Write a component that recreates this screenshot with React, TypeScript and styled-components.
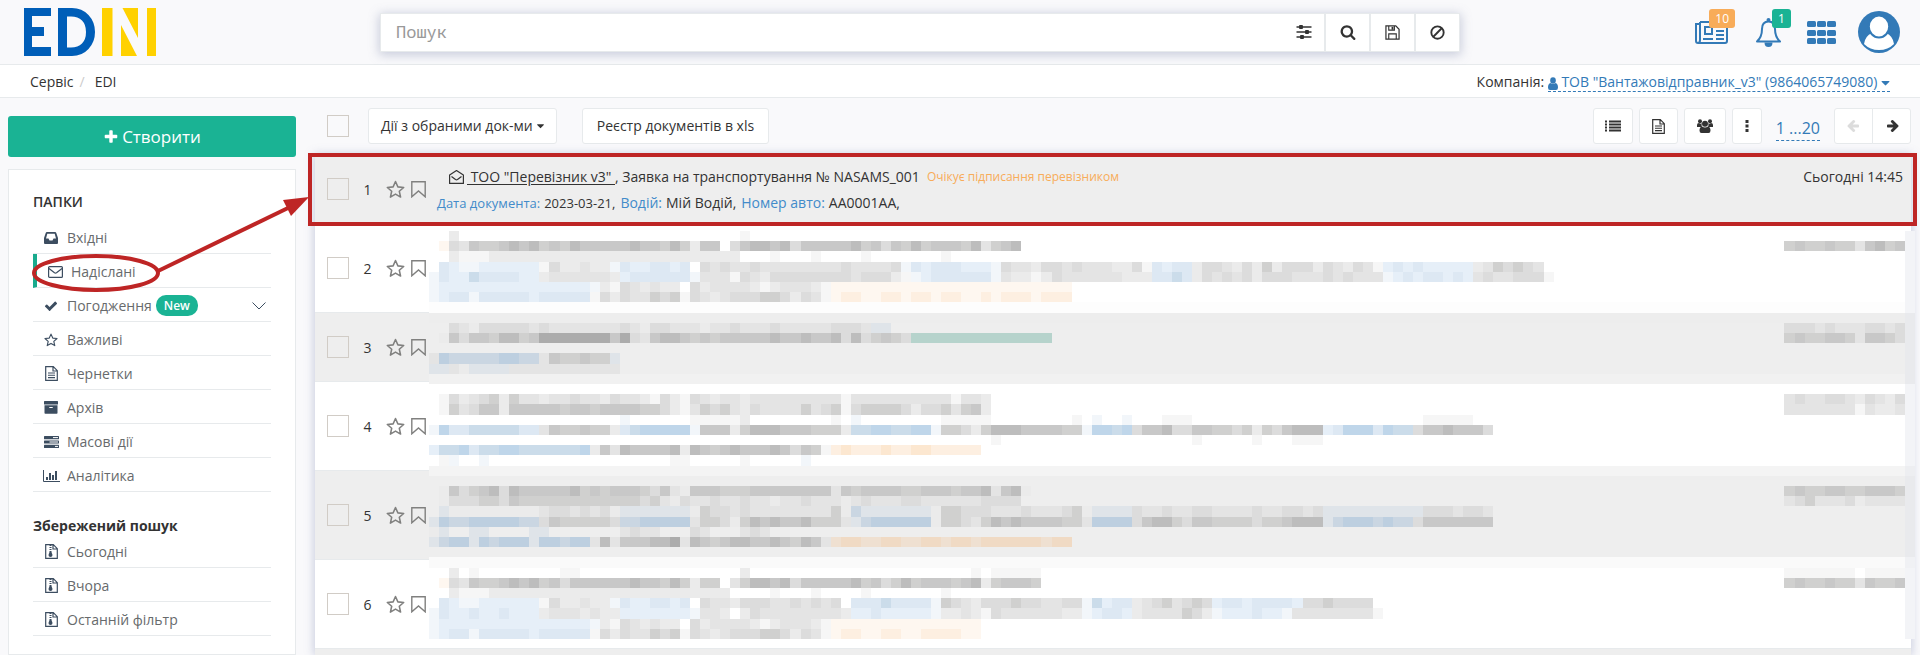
import React from 'react';
import styled, { createGlobalStyle, css } from 'styled-components';

/* ---------- palette ---------- */
const c = {
  page: '#f9f9fb',
  line: '#e7eaec',
  text: '#333333',
  muted: '#676a6c',
  link: '#337ab7',
  linkSoft: '#428bca',
  green: '#1ab394',
  orange: '#f8ac59',
  navy: '#3c4d60',
  mark: '#be2525',
  zebra: '#eeeeee',
};

const Global = createGlobalStyle`
  *, *::before, *::after { box-sizing: border-box; }
  html, body { margin: 0; padding: 0; }
  body {
    background: ${c.page};
    color: ${c.text};
    font-family: "Open Sans", "Noto Sans", sans-serif;
    font-size: 14px;
    font-kerning: none;
    line-height: 20px;
  }
  button, input { font: inherit; font-kerning: none; color: inherit; }
  button { cursor: pointer; }
  ul { list-style: none; margin: 0; padding: 0; }
  h2 { margin: 0; font-size: 14px; }
`;

/* ---------- icons ---------- */
type IconProps = { size?: number; w?: number; h?: number; box?: string; children: React.ReactNode; flip?: boolean };

const Svg = styled.svg<{ $flip?: boolean }>`
  display: inline-block;
  flex: none;
  vertical-align: middle;
  fill: currentColor;
  ${(p) => p.$flip && css`transform: scaleX(-1);`}
`;

const Icon = ({ size = 16, w, h, box = '0 0 16 16', children, flip }: IconProps) => (
  <Svg width={w ?? size} height={h ?? size} viewBox={box} $flip={flip} aria-hidden="true">
    {children}
  </Svg>
);

const line = { fill: 'none', stroke: 'currentColor' } as const;

const PlusIcon = () => (
  <Icon size={16} box="0 0 1792 1792">
    <path d="M1600 736v192q0 40-28 68t-68 28h-416v416q0 40-28 68t-68 28h-192q-40 0-68-28t-28-68v-416h-416q-40 0-68-28t-28-68v-192q0-40 28-68t68-28h416v-416q0-40 28-68t68-28h192q40 0 68 28t28 68v416h416q40 0 68 28t28 68z" />
  </Icon>
);
const CaretIcon = ({ size = 14 }: { size?: number }) => (
  <Icon w={size - 5} h={size} box="384 0 1024 1792">
    <path d="M1408 704q0 26-19 45l-448 448q-19 19-45 19t-45-19l-448-448q-19-19-19-45t19-45 45-19h896q26 0 45 19t19 45z" />
  </Icon>
);
const SearchIcon = () => (
  <Icon size={16} box="0 0 1792 1792">
    <path d="M1216 832q0-185-131.5-316.5t-316.5-131.5-316.5 131.5-131.5 316.5 131.5 316.5 316.5 131.5 316.5-131.5 131.5-316.5zm512 832q0 52-38 90t-90 38q-54 0-90-38l-343-342q-179 124-399 124-143 0-273.5-55.5t-225-150-150-225-55.5-273.5 55.5-273.5 150-225 225-150 273.5-55.5 273.5 55.5 225 150 150 225 55.5 273.5q0 220-124 399l343 343q37 37 37 90z" />
  </Icon>
);
const ArrowIcon = ({ flip }: { flip?: boolean }) => (
  <Icon size={14} box="0 0 1792 1792" flip={flip}>
    <path d="M1728 893q0 54-37 91l-651 651q-39 37-91 37-51 0-90-37l-75-75q-38-38-38-91t38-91l293-293h-704q-52 0-84.5-37.5t-32.5-90.5v-128q0-53 32.5-90.5t84.5-37.5h704l-293-294q-38-36-38-90t38-90l75-75q38-38 90-38 53 0 91 38l651 651q37 35 37 90z" />
  </Icon>
);
const CheckIcon = () => (
  <Icon size={14} box="0 0 1792 1792">
    <path d="M1671 566q0 40-28 68l-724 724-136 136q-28 28-68 28t-68-28l-136-136-362-362q-28-28-28-68t28-68l136-136q28-28 68-28t68 28l294 295 656-657q28-28 68-28t68 28l136 136q28 28 28 68z" />
  </Icon>
);
const SlidersIcon = () => (
  <Icon>
    <path d="M0.500 3h15M0.500 8h15M0.500 13h15" {...line} strokeWidth="1.300" />
    <rect x="3" y="1" width="4" height="4" rx="1" />
    <rect x="9" y="6" width="4" height="4" rx="1" />
    <rect x="4" y="11" width="4" height="4" rx="1" />
  </Icon>
);
const SaveIcon = () => (
  <Icon size={15}>
    <path d="M1 1h10.500L15 4.500V15H1z" {...line} strokeWidth="1.300" />
    <path d="M4 15V9.500h8V15M4 1v4.500h6V1" {...line} strokeWidth="1.200" />
    <rect x="7" y="2" width="2" height="3" />
  </Icon>
);
const BanIcon = () => (
  <Icon size={15}>
    <circle cx="8" cy="8" r="6.600" {...line} strokeWidth="2" />
    <path d="M3.500 12.500l9-9" {...line} strokeWidth="2" />
  </Icon>
);
const NewsIcon = () => (
  <Icon w={33} h={23} box="0 0 33 23">
    <path d="M5 1h26q1 0 1 1v18q0 2-2 2H3q-2 0-2-2V3h4M5 1v18q0 3-2 3" {...line} strokeWidth="2" />
    <path d="M10 6h7v7h-7z" {...line} strokeWidth="2" />
    <path d="M21 6h8M21 10h8M21 14h8M8 18h10M21 18h8" {...line} strokeWidth="2" />
  </Icon>
);
const BellIcon = () => (
  <Icon w={27} h={29} box="0 0 27 29">
    <path d="M2 23.500q5-4.500 5-12.500q0-7.500 6.500-7.500t6.500 7.500q0 8 5 12.500z" {...line} strokeWidth="2" strokeLinejoin="round" />
    <circle cx="13.500" cy="2" r="2" />
    <path d="M9.500 24.500h8q0 4.500-4 4.500t-4-4.500z" />
  </Icon>
);
const AppsIcon = () => (
  <Icon w={29} h={23} box="0 0 29 23">
    {[0, 9, 17].map((y) =>
      [0, 10, 20].map((x) => <rect key={`${x}-${y}`} x={x} y={y} width="9" height="6" rx="1.500" />),
    )}
  </Icon>
);
const AvatarIcon = () => (
  <Icon size={42} box="0 0 42 42">
    <circle cx="21" cy="21" r="21" />
    <path d="M14 22q3 5 7 5t7-5q7 3 8 11Q30 39 21 39T6 33Q7 25 14 22z" fill="#fff" />
    <ellipse cx="21" cy="15.500" rx="10.200" ry="11" fill="#fff" stroke="currentColor" strokeWidth="2" />
  </Icon>
);
const UserIcon = () => (
  <Icon w={10} h={13} box="0 0 10 13">
    <ellipse cx="5" cy="3.500" rx="2.800" ry="3.300" />
    <path d="M2.500 6q2.500 2 5 0q2.500.500 2.500 4.500q0 2.500-2 2.500h-6q-2 0-2-2.500q0-4 2.500-4.500z" />
  </Icon>
);
const ListIcon = () => (
  <Icon w={16} h={12} box="0 0 16 12">
    {[0, 3, 6, 9].map((y) => (
      <g key={y}>
        <rect x="0" y={y + 0.500} width="2" height="2" />
        <rect x="4" y={y + 0.500} width="12" height="2" />
      </g>
    ))}
  </Icon>
);
const FileIcon = () => (
  <Icon w={13} h={15} box="0 0 13 15">
    <path d="M0.700 0.700h7.600l4 4v9.600H0.700z M8 1v4h4" {...line} strokeWidth="1.200" />
    <path d="M3 7h7M3 9.300h7M3 11.600h7" {...line} strokeWidth="1.100" />
  </Icon>
);
const ZipIcon = () => (
  <Icon w={13} h={15} box="0 0 13 15">
    <path d="M0.700 0.700h7.600l4 4v9.600H0.700z M8 1v4h4" {...line} strokeWidth="1.200" />
    <path d="M5.500 1v7" {...line} strokeWidth="2" strokeDasharray="1 1" />
    <path d="M4.500 8h2l1 3q0 2-2 2t-2-2z" />
  </Icon>
);
const UsersIcon = () => (
  <Icon w={16} h={14} box="0 0 16 14">
    <circle cx="3" cy="2.300" r="2" />
    <circle cx="13" cy="2.300" r="2" />
    <circle cx="8" cy="4.800" r="3" />
    <path d="M0 8V6q0-2 2-2q2 1.500 3 0q-1 2 0 4zM16 8V6q0-2-2-2q-2 1.500-3 0q1 2 0 4z" />
    <path d="M5 7.500q3 2 6 0q2.500.500 2.500 4q0 2.500-2 2.500h-7q-2 0-2-2.500q0-3.500 2.500-4z" />
  </Icon>
);
const DotsIcon = () => (
  <Icon w={4} h={12} box="0 0 4 12">
    {[0, 4.500, 9].map((y) => (
      <rect key={y} x="0.500" y={y} width="3" height="3" />
    ))}
  </Icon>
);
const InboxIcon = () => (
  <Icon w={14} h={12} box="0 0 14 12">
    <path fillRule="evenodd" d="M3 0h8q1 0 1.300 1L14 6v5q0 1-1 1H1q-1 0-1-1V6l1.700-5Q2 0 3 0zM3.300 1.800L2 6.500h2.500l1 2h3l1-2H12l-1.300-4.700z" />
  </Icon>
);
const MailIcon = () => (
  <Icon w={15} h={12} box="0 0 15 12">
    <rect x="0.600" y="0.600" width="13.800" height="10.800" rx="1" {...line} strokeWidth="1.200" />
    <path d="M1 2.500l5.500 4.300q1 .700 2 0L14 2.500" {...line} strokeWidth="1.200" />
  </Icon>
);
const STAR = 'M8 1.300l2 4.500 4.900.500-3.700 3.200 1.100 4.900L8 11.900l-4.300 2.500 1.100-4.900L1.100 6.300 6 5.800z';
const StarIcon = ({ size = 14 }: { size?: number }) => (
  <Icon size={size}>
    <path d={STAR} {...line} strokeWidth="1.300" strokeLinejoin="round" />
  </Icon>
);
const ArchiveIcon = () => (
  <Icon w={14} h={13} box="0 0 14 13">
    <rect width="14" height="3.500" rx="0.500" />
    <path fillRule="evenodd" d="M0.500 4.200h13V12q0 .800-.800.800H1.300Q.500 12.800.500 12zM5.300 6v1h3.400V6z" />
  </Icon>
);
const TasksIcon = () => (
  <Icon w={15} h={12} box="0 0 15 12">
    <rect width="15" height="3.200" rx="0.500" />
    <rect y="4.400" width="15" height="3.200" rx="0.500" />
    <rect y="8.800" width="15" height="3.200" rx="0.500" />
    <path d="M9 1.600h5M5.500 6h8.500M11 10.400h3" stroke="#fff" />
  </Icon>
);
const ChartIcon = () => (
  <Icon w={17} h={12} box="0 0 17 12">
    <path d="M0.500 0v11.500H17" {...line} />
    <path d="M3 10V7h2v3zM6 10V3h2v7zM9 10V5h2v5zM12 10V1h2v9z" />
  </Icon>
);
const ChevronIcon = () => (
  <Icon w={14} h={8} box="0 0 14 8">
    <path d="M0.500 0.500L7 7l6.500-6.500" {...line} />
  </Icon>
);
const BookmarkIcon = () => (
  <Icon w={15} h={17} box="0 0 15 17">
    <path d="M0.800 0.800h13.400v15L7.500 10 0.800 15.800z" {...line} strokeWidth="1.400" />
  </Icon>
);
const OpenMailIcon = () => (
  <Icon w={15} h={14} box="0 0 15 14">
    <path d="M0.600 5L7.500 0.600 14.400 5v8.400H0.600z" {...line} strokeWidth="1.200" strokeLinejoin="round" />
    <path d="M2.500 6.500l4 3q1 .600 2 0l4-3" {...line} strokeWidth="1.200" />
  </Icon>
);
const Logo = () => (
  <Svg width="132" height="48" viewBox="0 0 132 48" role="img" aria-label="EDIN">
    <g fill="#005eb8">
      <rect width="8" height="48" />
      <rect width="27" height="8" />
      <rect y="19" width="20" height="9" />
      <rect y="39" width="27" height="9" />
      <path fillRule="evenodd" d="M34 0h14q10 0 16.500 7T71 24t-6.500 17T48 48H34zM43 8.500v31h4q7 0 11-4t4-11.500-4-11.500-11-4z" />
    </g>
    <g fill="#ffd100">
      <rect x="78" width="10.500" height="48" />
      <rect x="123" width="9" height="48" />
      <path d="M98.500 0H114v30zM97 17v31h16z" />
    </g>
  </Svg>
);

/* ---------- page frame ---------- */
const Page = styled.div`
  display: flex;
  flex-direction: column;
  height: 100vh;
  min-height: 400px;
  overflow: hidden;
`;

const Header = styled.header`
  display: grid;
  grid-template-columns: 380px minmax(0, 1fr) 460px;
  align-items: center;
  flex: none;
  height: 65px;
  border-bottom: 1px solid ${c.line};
`;

const LogoLink = styled.a`
  display: flex;
  padding-left: 24px;
`;

const SearchBar = styled.form`
  display: flex;
  height: 39px;
  background: #fff;
  border: 1px solid ${c.line};
  box-shadow: 0 2px 10px 1px rgba(110, 120, 160, 0.35);
`;

const SearchInput = styled.input`
  flex: 1;
  min-width: 0;
  padding: 0 15px;
  border: 0;
  outline: 0;
  background: transparent;
  font-family: "Noto Sans Mono", "DejaVu Sans Mono", monospace;
  font-size: 17px;
  &::placeholder { color: #999; opacity: 1; }
`;

const SearchButton = styled.button<{ $plain?: boolean }>`
  display: flex;
  align-items: center;
  justify-content: center;
  width: ${(p) => (p.$plain ? 40 : 45)}px;
  padding: 0;
  border: 0;
  border-left: ${(p) => (p.$plain ? 0 : 2)}px solid ${c.line};
  background: #fff;
`;

const HeaderTools = styled.nav`
  display: flex;
  align-items: center;
  justify-content: flex-end;
  gap: 22px;
  padding-right: 20px;
  color: ${c.link};
`;

const ToolButton = styled.button<{ $w: number }>`
  position: relative;
  display: flex;
  align-items: center;
  justify-content: center;
  width: ${(p) => p.$w}px;
  height: 42px;
  padding: 0;
  border: 0;
  background: none;
`;

const CountBadge = styled.span<{ $color: string }>`
  position: absolute;
  top: -2px;
  right: -6px;
  min-width: 19px;
  padding: 0 6px;
  border-radius: 3px;
  background: ${(p) => p.$color};
  color: #fff;
  font-size: 12px;
  line-height: 19px;
`;

const CrumbBar = styled.div`
  display: flex;
  align-items: center;
  justify-content: space-between;
  flex: none;
  height: 33px;
  padding: 2px 30px 0;
  background: #fff;
  border-bottom: 1px solid ${c.line};
`;

const Crumbs = styled.nav`
  display: flex;
  gap: 6px;
  a { color: inherit; text-decoration: none; }
  span { padding-right: 4px; color: #ccc; }
`;

const CompanyLink = styled.a`
  display: inline-block;
  border-bottom: 1px dashed ${c.link};
  color: ${c.link};
  line-height: 18px;
  text-decoration: none;
`;

const Workspace = styled.div`
  position: relative;
  display: grid;
  grid-template-columns: 288px minmax(0, 1fr);
  gap: 19px;
  flex: 1;
  min-height: 0;
  padding: 0 9px 0 8px;
`;

/* ---------- sidebar ---------- */
const Sidebar = styled.aside`
  display: flex;
  flex-direction: column;
  gap: 12px;
  padding-top: 18px;
`;

const CreateButton = styled.button`
  display: flex;
  align-items: center;
  justify-content: center;
  gap: 3px;
  height: 41px;
  border: 0;
  border-radius: 3px;
  background: ${c.green};
  color: #fff;
  font-size: 17px;
`;

const Panel = styled.div`
  flex: 1;
  padding: 22px 24px 0;
  background: #fff;
  border: 1px solid ${c.line};
`;

const PanelTitle = styled.h2<{ $strong?: boolean }>`
  font-weight: ${(p) => (p.$strong ? 700 : 600)};
  margin: ${(p) => (p.$strong ? '24px 0 -2px' : '0 0 8px')};
`;

const MenuItem = styled.li<{ $active?: boolean }>`
  height: 34px;
  border-bottom: 1px solid ${c.line};
  ${(p) => p.$active && css`border-left: 4px solid #19aa8d;`}
`;

const MenuLink = styled.a`
  display: flex;
  align-items: center;
  height: 33px;
  padding: 2px 5px 0 9px;
  color: ${c.muted};
  text-decoration: none;
`;

const MenuIcon = styled.span`
  display: flex;
  justify-content: center;
  width: 18px;
  margin-right: 7px;
  color: ${c.navy};
`;

const NewBadge = styled.span`
  margin-left: 4px;
  padding: 0 8px;
  border-radius: 10px;
  background: ${c.green};
  color: #fff;
  font-size: 12px;
  font-weight: 600;
  line-height: 21px;
`;

const MenuToggle = styled.span`
  display: flex;
  margin-left: auto;
  color: ${c.navy};
`;

/* ---------- toolbar ---------- */
const Main = styled.main`
  display: flex;
  flex-direction: column;
  min-width: 0;
  min-height: 0;
`;

const Toolbar = styled.div`
  display: flex;
  align-items: center;
  flex: none;
  height: 57px;
  padding: 0 0 1px 12px;
`;

const Tick = styled.input.attrs({ type: 'checkbox' })`
  appearance: none;
  flex: none;
  width: 22px;
  height: 22px;
  margin: 0;
  border: 1px solid #d1ccc6;
`;

const Button = styled.button<{ $pad?: number; $ml?: number }>`
  display: flex;
  align-items: center;
  justify-content: center;
  gap: 4px;
  height: 36px;
  margin-left: ${(p) => p.$ml ?? 6}px;
  padding: 0 ${(p) => p.$pad ?? 12}px;
  border: 1px solid ${c.line};
  border-radius: 3px;
  background: #fff;
  white-space: nowrap;
`;

const ToolbarRight = styled.div`
  display: flex;
  align-items: center;
  margin-left: auto;
`;

const PageRange = styled.a`
  margin: 4px 14px 0;
  border-bottom: 1px dashed ${c.link};
  color: ${c.link};
  font-size: 16px;
  line-height: 24px;
  text-decoration: none;
`;

const Pager = styled.div`
  display: flex;
  button { width: 39px; margin: 0; padding: 0; }
  button:first-child { border-radius: 3px 0 0 3px; }
  button:last-child { margin-left: -1px; border-radius: 0 3px 3px 0; }
  button:disabled { color: #dcdcdc; cursor: default; }
`;

/* ---------- document list ---------- */
const List = styled.ul`
  position: relative;
  display: flex;
  flex-direction: column;
  flex: 1;
  background: #fff;
  box-shadow: 0 0 9px 1px rgba(110, 120, 170, 0.35);
`;

const DocRow = styled.li<{ $lines: number; $shaded?: boolean }>`
  position: relative;
  display: flex;
  align-items: center;
  flex: none;
  min-height: ${(p) => 29 + p.$lines * 20}px;
  padding: 0 8px 0 12px;
  border-bottom: 1px solid ${c.line};
  background: ${(p) => (p.$shaded ? c.zebra : '#fff')};
`;

const NextRow = styled.li`
  flex: 1;
  background: ${c.zebra};
`;

const RowNumber = styled.span`
  width: 37px;
  padding-top: 2px;
  text-align: center;
`;

const RowAction = styled.button`
  display: flex;
  align-items: center;
  justify-content: center;
  width: 19px;
  height: 20px;
  margin-right: 4px;
  padding: 0;
  border: 0;
  background: none;
  color: #80807f;
`;

const DocBody = styled.div`
  flex: 1;
  min-width: 0;
  padding: 2px 0 0 5px;
  line-height: 26px;
`;

const DocTitle = styled.div`
  display: flex;
  align-items: center;
  gap: 3px;
  padding-left: 12px;
`;

const DocName = styled.p`
  margin: 0;
  white-space: pre;
  a { color: inherit; text-underline-offset: 2px; }
`;

const DocStatus = styled.span`
  margin-left: 4px;
  color: ${c.orange};
  font-size: 12px;
`;

const DocMeta = styled.dl`
  display: flex;
  gap: 5px;
  margin: 0;
  div { display: flex; gap: 4px; }
  div:first-child { font-size: 13px; }
  dt { color: ${c.linkSoft}; }
  dd { margin: 0; }
`;

const DocDate = styled.time`
  align-self: flex-start;
  padding-top: 9px;
  line-height: 26px;
`;

/* ---------- pixelated cells over private rows ---------- */
const tones: Record<string, string> = {
  K: '#acacac', a: '#bdbdbd', b: '#c8c8c8', c: '#d0d0cf', d: '#dcdcdc', e: '#e4e4e4', f: '#ebebeb', g: '#f6f6f6',
  p: '#bfd6ea', q: '#cbdcea', r: '#dde8f3', s: '#e6eff8', t: '#f2f6fa',
  P: '#bdcfe0', Q: '#cad6e2', R: '#dfe4e9',
  o: '#fce7d0', n: '#fdefe1', m: '#fef7f0', O: '#f0dac4', N: '#efe0d1', G: '#b6d3cc',
};

/* cells are written in groups of ten; spaces are ignored and a dot leaves the row showing */
type Run = [row: number, col: number, cells: string];

const soft = 'rsttssssss gdffefftrs srrsr';
const veil = 'tsssssssss sssssstfgd efeff.dfee eefgfeeefg';
const base = 'tsrrtrrrrr srrrrrgdfd eecdcgdefe dddccdfdeg';

const runs: Run[] = [
  [0, 2, 'f'], [0, 31, 'g'],
  [1, 1, 'mdebccbaba cbcabbbbba bbcacfbb.d baabadbbbb bacbdbcacb bbcaecba'],
  [1, 135, 'cbccbccebacb'],
  [2, 2, 'fgggffffff ffffffffff fffffffff'], [2, 34, 'g'], [2, 38, 'g'], [2, 43, 'g'], [2, 51, 'g'],
  [3, 1, soft],
  [3, 27, 'dedeedeeee eeeedeeeed trsrrrssst deefddedee effdgrsrrf ddefdfcfdd dfdefdegsr srsssssfec dcde'],
  [4, 0, 'trssqrrrrs sfeeeeeefs rrrrrrteee gdefdddddd ddedddfgts rrrrrrteff gfdeeeeeef ffrrqrfded edfdddeeed edeeetsrsr rsrsedeedd dg'],
  [5, 0, veil], [5, 40, 'mmmmmmmmmm mmmmmmmmmm mmmm'],
  [6, 0, base], [6, 40, 'mnnmmnnmnn mnnmmnmnnn mnnn'],
  [9, 2, 'defddddded eeeeeeedef ddeeefeede eedeeeee dddeRR'], [9, 135, 'dddedeeedded'],
  [10, 1, 'fbdbbcaacb KKKKKKKbKd ebaabcbcbb bbbabbabba dadcbcd GGGGGGGGGGGGGG'], [10, 135, 'cbccbbcebbcd'],
  [12, 0, 'ePQQQQQPPQQebccbccR'], [13, 0, 'RRefRRRReeeeeeeeeee'],
  [16, 1, 'gdfedcfcee feedeefdee fgdfgdefee feeeeeeeee geeeeeeeee egeef'], [16, 135, 'edeeddefdefd'],
  [17, 1, 'gcedbbfbbb bbcbbcbbbb ccdfgecdce fdeeeecedc gdccccdfdd cecbf'], [17, 135, 'eeeeeeegeffe'],
  [18, 19, 't'], [18, 26, 'ggggg'], [18, 31, 'f'], [18, 40, 'g.t'], [18, 51, 'ggggg'], [18, 64, 'g.t..t'], [18, 73, 'ggg'], [18, 99, 'ggggg'],
  [19, 0, 'tprrqqqqqr rebccbccfr qpppppt bbb fcaaabbbcc cfqqppqqpp tccdfcaaab bbbcctppqp dbbaddbbcc dcfcdbaaas rppprpqqdb babbbd'],
  [20, 56, 'g'], [20, 76, 'g'], [20, 82, 'g'], [20, 86, 'ggg'],
  [21, 0, 'sqqprqqppqqqqqqpfbeabbbbafabcbabbbabdbcgnonnnonnoonnnnn'],
  [22, 1, 'gt'], [22, 5, 't'], [22, 24, 'gg'], [22, 31, 'g'], [22, 37, 't'],
  [25, 1, 'fbdcbadabbbbbacbcbbbcdbefbbbcccbbbbbbbbebcbbbbccbbbcbbaebaf'], [25, 135, 'cbccbbccbbbc'],
  [26, 1, 'fdddccdbccccccccccccdcefdeedeedeefeedeeefedeeeddeeeeeedddd'], [26, 135, 'edceeedfeeee'],
  [27, 1, 'Rfffffffff eddededfRR RRRRRfcdde deeeeeeeec fQRRRRRRRf ccdddeeede eedcfRRRRd eedeeddeee edeeddedRR RRRRRRRRdd dedde'],
  [28, 0, 'RPQQPPPPPQ QdbcccccdQ QPPPPPeccd fcababbacc ceRQPPPPPP fccdecabab bbbccePPPP dbaacdbbcc ccdccbaaaR QPPPQPQQdb bbbbbb'],
  [29, 0, 'fR'], [29, 4, 'RR'], [29, 10, 'RR'], [29, 19, 'edee'], [29, 26, 'de'], [29, 31, 'ede'],
  [30, 0, 'RQPPRPQPPPRPPQPPeaebbbaaKeabcbaabbabcabeNOONNOONNOONOONOOOOOONOO'],
  [33, 2, 'f'], [33, 4, 'g'], [33, 13, 'gg'], [33, 31, 'f'], [33, 54, 'g.ggggg'], [33, 135, 'ggggggg.gggg'],
  [34, 1, 'mdebccbaba cbdbbbbbba bbcacfcc.e caabadbbbb bacbdcacbb bcbafcbbbc'], [34, 135, 'cbccbccebccb'],
  [35, 2, 'fgggffffff ffffffffff ffffffff'], [35, 34, 'g'], [35, 38, 'g'], [35, 43, 'g'], [35, 51, 'g'],
  [36, 1, soft], [36, 27, 'deefdddeed eded.rrrqr rrrtcdefdd dcddeeddtq srrfedcedc dsrrsrrrrs ddcdddd'],
  [37, 0, 'trssrssrss sfeeefeffs ssssssteef .fdeeeeeee efssrsssss tffefgdeee eeefftsrrs feeeecdfts ssrssteeee eeeeg'],
  [38, 0, veil], [38, 40, 'mmmmmmmmmmmmmmm'],
  [39, 0, base], [39, 40, 'mnnmmnnmmnnnnmm'],
];

/* rows of cells where one document fades into the next */
const bands: Record<number, string> = { 7: '#fdfdfd', 8: '#ededed', 14: '#f1f1f1', 23: '#f4f4f4', 32: '#fafafa' };

const edgeTone = (row: number) => {
  if (row === 23) return '#edeef1';
  if (row === 32) return '#f0f1f4';
  return (row > 7 && row < 15) || (row > 23 && row < 32) ? '#e9eaed' : '#f3f4f7';
};

const Redaction = styled.svg`
  position: absolute;
  top: 76px;
  left: 114px;
  width: calc(100% - 110px);
  height: 408px;
  pointer-events: none;
`;

const RedactedCells = () => (
  <Redaction viewBox="0 0 148 40" preserveAspectRatio="none" shapeRendering="crispEdges" aria-hidden="true">
    {Object.entries(bands).map(([row, fill]) => (
      <rect key={row} y={row} width="148" height="1" fill={fill} />
    ))}
    {runs.map(([row, col, cells]) =>
      cells
        .replace(/ /g, '')
        .split('')
        .map((k, i) =>
          tones[k] ? <rect key={`${row}-${col + i}`} x={col + i} y={row} width="1" height="1" fill={tones[k]} /> : null,
        ),
    )}
    {Array.from({ length: 40 }, (_, row) => (
      <rect key={row} x="147" y={row} width="1" height="1" fill={edgeTone(row)} />
    ))}
  </Redaction>
);

/* ---------- callouts ---------- */
const RowFrame = styled.span`
  position: absolute;
  inset: -2px -6px -3px -7px;
  z-index: 2;
  border: 4px solid ${c.mark};
  pointer-events: none;
`;

const Callout = styled.svg`
  position: absolute;
  top: 90px;
  left: 30px;
  z-index: 3;
  pointer-events: none;
`;

/* ---------- data ---------- */
type Entry = { label: string; icon: React.ReactNode; active?: boolean; badge?: string };

const folders: Entry[] = [
  { label: 'Вхідні', icon: <InboxIcon /> },
  { label: 'Надіслані', icon: <MailIcon />, active: true },
  { label: 'Погодження', icon: <CheckIcon />, badge: 'New' },
  { label: 'Важливі', icon: <StarIcon /> },
  { label: 'Чернетки', icon: <FileIcon /> },
  { label: 'Архів', icon: <ArchiveIcon /> },
  { label: 'Масові дії', icon: <TasksIcon /> },
  { label: 'Аналітика', icon: <ChartIcon /> },
];

const saved: Entry[] = [
  { label: 'Сьогодні', icon: <ZipIcon /> },
  { label: 'Вчора', icon: <ZipIcon /> },
  { label: 'Останній фільтр', icon: <ZipIcon /> },
];

const Menu = ({ entries }: { entries: Entry[] }) => (
  <ul>
    {entries.map((e) => (
      <MenuItem key={e.label} $active={e.active}>
        <MenuLink href="#">
          <MenuIcon>{e.icon}</MenuIcon>
          {e.label}
          {e.badge && <NewBadge>{e.badge}</NewBadge>}
          {e.badge && <MenuToggle><ChevronIcon /></MenuToggle>}
        </MenuLink>
      </MenuItem>
    ))}
  </ul>
);

const RowControls = ({ n }: { n: number }) => (
  <>
    <Tick aria-label={`Документ ${n}`} />
    <RowNumber>{n}</RowNumber>
    <RowAction type="button" aria-label="Важливе"><StarIcon size={19} /></RowAction>
    <RowAction type="button" aria-label="Закладка"><BookmarkIcon /></RowAction>
  </>
);

const hiddenRows = [
  { n: 2, lines: 3 },
  { n: 3, lines: 2 },
  { n: 4, lines: 3 },
  { n: 5, lines: 3 },
  { n: 6, lines: 3 },
];

export default function App() {
  return (
    <Page>
      <Global />
      <Header>
        <LogoLink href="#"><Logo /></LogoLink>
        <SearchBar onSubmit={(e) => e.preventDefault()}>
          <SearchInput placeholder="Пошук" aria-label="Пошук" />
          <SearchButton type="button" $plain aria-label="Фільтри"><SlidersIcon /></SearchButton>
          <SearchButton type="submit" aria-label="Шукати"><SearchIcon /></SearchButton>
          <SearchButton type="button" aria-label="Зберегти"><SaveIcon /></SearchButton>
          <SearchButton type="button" aria-label="Очистити"><BanIcon /></SearchButton>
        </SearchBar>
        <HeaderTools>
          <ToolButton $w={36} aria-label="Новини">
            <NewsIcon />
            <CountBadge $color={c.orange}>10</CountBadge>
          </ToolButton>
          <ToolButton $w={34} aria-label="Сповіщення">
            <BellIcon />
            <CountBadge $color={c.green}>1</CountBadge>
          </ToolButton>
          <ToolButton $w={29} aria-label="Сервіси"><AppsIcon /></ToolButton>
          <ToolButton $w={42} aria-label="Профіль"><AvatarIcon /></ToolButton>
        </HeaderTools>
      </Header>

      <CrumbBar>
        <Crumbs>
          <a href="#">Сервіс</a>
          <span>/</span>
          <a href="#">EDI</a>
        </Crumbs>
        <div>
          Компанія:{' '}
          <CompanyLink href="#">
            <UserIcon /> ТОВ "Вантажовідправник_v3" (9864065749080) <CaretIcon />
          </CompanyLink>
        </div>
      </CrumbBar>

      <Workspace>
        <Sidebar>
          <CreateButton type="button"><PlusIcon />Створити</CreateButton>
          <Panel>
            <PanelTitle>ПАПКИ</PanelTitle>
            <Menu entries={folders} />
            <PanelTitle $strong>Збережений пошук</PanelTitle>
            <Menu entries={saved} />
          </Panel>
        </Sidebar>

        <Main>
          <Toolbar>
            <Tick aria-label="Обрати всі" />
            <Button type="button" $ml={19}>Дії з обраними док-ми<CaretIcon size={12} /></Button>
            <Button type="button" $ml={25} $pad={14}>Реєстр документів в xls</Button>
            <ToolbarRight>
              <Button type="button" $pad={11} aria-label="Список"><ListIcon /></Button>
              <Button type="button" aria-label="Документ"><FileIcon /></Button>
              <Button type="button" aria-label="Користувачі"><UsersIcon /></Button>
              <Button type="button" aria-label="Ще"><DotsIcon /></Button>
              <PageRange href="#">1 ...20</PageRange>
              <Pager>
                <Button type="button" disabled aria-label="Назад"><ArrowIcon flip /></Button>
                <Button type="button" aria-label="Вперед"><ArrowIcon /></Button>
              </Pager>
            </ToolbarRight>
          </Toolbar>

          <List>
            <DocRow $lines={2} $shaded>
              <RowControls n={1} />
              <DocBody>
                <DocTitle>
                  <OpenMailIcon />
                  <DocName>
                    <a href="#"> ТОО "Перевізник v3" </a>, Заявка на транспортування № NASAMS_001
                  </DocName>
                  <DocStatus>Очікує підписання перевізником</DocStatus>
                </DocTitle>
                <DocMeta>
                  <div><dt>Дата документа:</dt><dd>2023-03-21,</dd></div>
                  <div><dt>Водій:</dt><dd>Мій Водій,</dd></div>
                  <div><dt>Номер авто:</dt><dd>АА0001АА,</dd></div>
                </DocMeta>
              </DocBody>
              <DocDate>Сьогодні 14:45</DocDate>
              <RowFrame />
            </DocRow>
            {hiddenRows.map((r) => (
              <DocRow key={r.n} $lines={r.lines} $shaded={r.n % 2 === 1}>
                <RowControls n={r.n} />
              </DocRow>
            ))}
            <NextRow />
            <RedactedCells />
          </List>
        </Main>

        <Callout width="280" height="120" viewBox="0 0 280 120" aria-hidden="true">
          <ellipse cx="66" cy="85" rx="62" ry="17" fill="none" stroke={c.mark} strokeWidth="4" />
          <path d="M128 83L258 20" stroke={c.mark} strokeWidth="4" />
          <path d="M279 9L253 12L261 28z" fill={c.mark} />
        </Callout>
      </Workspace>
    </Page>
  );
}
